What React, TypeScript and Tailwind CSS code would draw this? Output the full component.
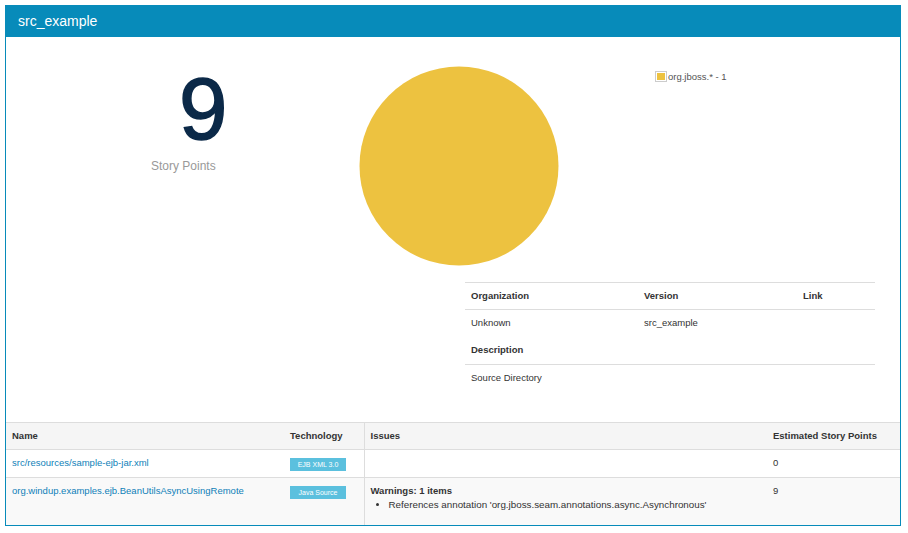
const rows = [
  {
    name: "src/resources/sample-ejb-jar.xml",
    tech: "EJB XML 3.0",
    warnings: null as null | { count: number; items: string[] },
    points: 0,
  },
  {
    name: "org.windup.examples.ejb.BeanUtilsAsyncUsingRemote",
    tech: "Java Source",
    warnings: {
      count: 1,
      items: ["References annotation 'org.jboss.seam.annotations.async.Asynchronous'"],
    },
    points: 9,
  },
];

function PieChart() {
  return (
    <svg width="200" height="200" viewBox="0 0 200 200" className="shrink-0">
      <circle cx="100" cy="100" r="99.5" fill="#edc240" />
    </svg>
  );
}

function ProjectInfo() {
  return (
    <table className="w-[410px] table-fixed border-collapse text-[9.5px] text-[#333]">
      <colgroup>
        <col className="w-[173px]" />
        <col className="w-[159px]" />
        <col />
      </colgroup>
      <tbody>
        <tr className="h-[27px] border-t border-[#ddd] font-bold">
          <td className="px-[6px]">Organization</td>
          <td className="px-[6px]">Version</td>
          <td className="px-[6px]">Link</td>
        </tr>
        <tr className="h-[27px] border-t border-[#ddd]">
          <td className="px-[6px]">Unknown</td>
          <td className="px-[6px]">src_example</td>
          <td className="px-[6px]"></td>
        </tr>
        <tr className="h-[28px] font-bold">
          <td className="px-[6px]" colSpan={3}>
            Description
          </td>
        </tr>
        <tr className="h-[27px] border-t border-[#ddd]">
          <td className="px-[6px]" colSpan={3}>
            Source Directory
          </td>
        </tr>
      </tbody>
    </table>
  );
}

export default function App() {
  return (
    <div className="min-h-[533px] bg-white p-[5px] font-['Liberation_Sans',Arial,sans-serif]">
      <div className="w-[896px] border border-[#078bba]">
        {/* titulo */}
        <div className="flex h-[31px] items-center bg-[#078bba] pl-[12px] text-[14px] text-white">
          src_example
        </div>

        {/* resumo + grafico */}
        <div className="pb-[30px]">
          <div className="flex items-start">
            <div className="flex w-[353px] shrink-0 flex-col pt-[28px]">
              <div className="ml-[173px] text-[87px] leading-[87px] text-[#0b2948] [-webkit-text-stroke:1.5px_#0b2948]">
                9
              </div>
              <div className="ml-[145px] mt-[6px] text-[12px] leading-[16px] text-[#999]">
                Story Points
              </div>
            </div>
            <div className="mt-[29px]">
              <PieChart />
            </div>
            <div className="ml-[96px] mt-[34px] flex items-center text-[9.5px] leading-[11px] text-[#545454]">
              <span className="mr-px border border-[#ccc] p-px">
                <span className="block h-[7px] w-[8px] bg-[#edc240]" />
              </span>
              org.jboss.* - 1
            </div>
          </div>
          <div className="ml-[459px] mt-[16px]">
            <ProjectInfo />
          </div>
        </div>

        {/* arquivos */}
        <table className="w-[894px] table-fixed border-collapse text-[9.5px] leading-[14px] text-[#333]">
          <colgroup>
            <col className="w-[278px]" />
            <col className="w-[80px]" />
            <col className="w-[403px]" />
            <col />
          </colgroup>
          <thead>
            <tr className="h-[27px] border-t border-[#ddd] bg-[#f5f5f5] text-left font-bold">
              <th className="px-[6px]">Name</th>
              <th className="px-[6px]">Technology</th>
              <th className="border-l border-[#ddd] px-[6px]">Issues</th>
              <th className="px-[6px]">Estimated Story Points</th>
            </tr>
          </thead>
          <tbody>
            {rows.map((r, i) => (
              <tr
                key={r.name}
                className={`border-t border-[#ddd] align-top ${
                  i % 2 === 1 ? "h-[48px] bg-[#f9f9f9]" : "h-[28px] bg-white"
                }`}
              >
                <td className="px-[6px] pt-[6px]">
                  <a className="text-[#0f7fb8]">{r.name}</a>
                </td>
                <td className="px-[6px] pt-[8px]">
                  <span className="block w-[56px] bg-[#5bc0de] text-center text-[7px] leading-[13px] text-white">
                    {r.tech}
                  </span>
                </td>
                <td className="border-l border-[#ddd] px-[6px] pt-[6px] text-[#333]">
                  {r.warnings && (
                    <>
                      <div className="font-bold">Warnings: {r.warnings.count} items</div>
                      <ul className="list-disc pl-[18px] text-[9.8px]">
                        {r.warnings.items.map((t) => (
                          <li key={t}>{t}</li>
                        ))}
                      </ul>
                    </>
                  )}
                </td>
                <td className="px-[6px] pt-[6px] text-[#333]">{r.points}</td>
              </tr>
            ))}
          </tbody>
        </table>
      </div>
    </div>
  );
}
